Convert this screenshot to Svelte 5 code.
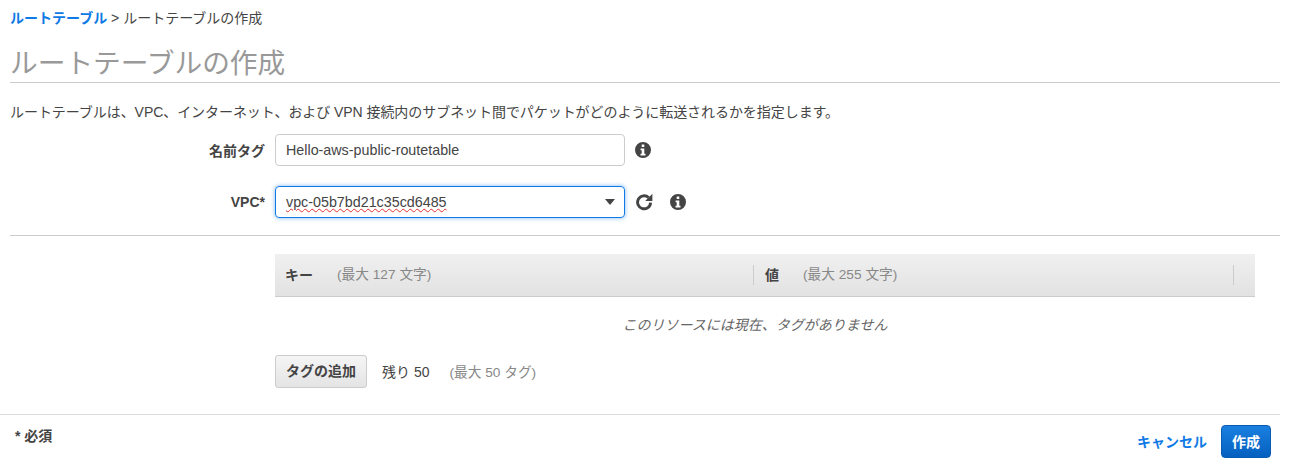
<script>
  const fontNote = 'Layout follows the AWS route table creation form';
</script>

<div class="page" data-note={fontNote}>
  <nav class="crumbs"><a href="#top">ルートテーブル</a> &gt; ルートテーブルの作成</nav>
  <h1>ルートテーブルの作成</h1>
  <p class="desc">ルートテーブルは、VPC、インターネット、および VPN 接続内のサブネット間でパケットがどのように転送されるかを指定します。</p>

  <div class="form">
    <div class="row first">
      <span class="label">名前タグ</span>
      <div class="input">Hello-aws-public-routetable</div>
      <svg class="info" viewBox="0 0 16 16"><use href="#i"></use></svg>
      <svg width="0" height="0" class="defs"><symbol id="i" viewBox="0 0 16 16"><path fill-rule="evenodd" d="M8 0a8 8 0 1 0 0 16A8 8 0 0 0 8 0ZM6.7 2.6h2.6v2.5H6.7ZM5.6 6.5h3.7v5.2h1.2v1.8H5.5v-1.8h1.2V8.3H5.6Z"/></symbol></svg>
    </div>
    <div class="row second">
      <span class="label">VPC*</span>
      <div class="input select"><span class="squiggle">vpc-05b7bd21c35cd6485</span><i class="caret"></i></div>
      <svg class="refresh" viewBox="0 0 18 18"><path d="M15.6 9.6A6.5 6.5 0 1 1 13.6 4.6" fill="none" stroke="#444" stroke-width="2.9"/><path d="M17.4 .8v7.2h-7.2Z" fill="#444"/></svg>
      <svg class="info gap" viewBox="0 0 16 16"><use href="#i"></use></svg>
    </div>
  </div>

  <hr class="rule" />

  <div class="tags">
    <div class="thead">
      <div class="th key"><b>キー</b><span>(最大 127 文字)</span></div>
      <div class="th val"><b>値</b><span>(最大 255 文字)</span></div>
    </div>
    <div class="empty">このリソースには現在、タグがありません</div>
    <div class="actions">
      <button class="add">タグの追加</button>
      <span class="left">残り 50</span>
      <span class="max">(最大 50 タグ)</span>
    </div>
  </div>

  <footer>
    <span class="req">* 必須</span>
    <div class="btns">
      <a href="#top" class="cancel">キャンセル</a>
      <button class="primary">作成</button>
    </div>
  </footer>
</div>

<style>
  :global(body) { margin: 0; background: #fff; }
  .page {
    width: 1294px; height: 468px; overflow: hidden; box-sizing: border-box;
    padding: 9px 14px 0 10px;
    font-family: "Liberation Sans", "Noto Sans CJK JP", sans-serif;
    font-size: 14px; color: #444;
  }
  .crumbs { height: 19px; line-height: 18px; }
  .crumbs a { color: #0f7ae5; font-weight: 700; text-decoration: none; }
  h1 {
    margin: 18px 0 0; height: 37px; line-height: 36px; box-sizing: border-box;
    font-size: 27.7px; font-weight: 400; color: #999; border-bottom: 1px solid #ccc;
  }
  .desc { margin: 0; padding-top: 20px; line-height: 19px; height: 19px; white-space: nowrap; letter-spacing: -0.06px; }
  .form { padding-top: 12px; }
  .row { display: flex; align-items: center; height: 32px; }
  .second { margin-top: 20px; }
  .label { width: 265px; box-sizing: border-box; text-align: right; padding-right: 10px; font-weight: 700; color: #444; }
  .input {
    width: 350px; height: 32px; box-sizing: border-box; border: 1px solid #ccc; border-radius: 4px;
    padding: 0 10px; line-height: 30px; color: #444; font-size: 14.3px; position: relative;
  }
  .select { border-color: #0f7ae5; box-shadow: 0 0 4px rgba(15, 122, 229, .55); }
  .squiggle { text-decoration: underline wavy #e0312e 1px; text-underline-offset: 1px; }
  .caret {
    position: absolute; right: 9px; top: 12px; width: 0; height: 0;
    border-left: 5.5px solid transparent; border-right: 5.5px solid transparent; border-top: 6px solid #444;
  }
  .info { width: 16px; height: 16px; margin-left: 10px; fill: #444; flex: none; }
  .refresh { width: 18px; height: 18px; margin-left: 10px; flex: none; }
  .gap { margin-left: 17px; }
  .defs { position: absolute; }
  .rule { margin: 17px 0 0; border: 0; border-top: 1px solid #ccc; height: 0; }
  .tags { margin: 18px 25px 0 265px; }
  .thead {
    display: flex; height: 43px; box-sizing: border-box; border-bottom: 1px solid #ccc;
    background: linear-gradient(#f0f0f0, #e2e2e2); align-items: center; font-size: 14px;
  }
  .th { height: 20px; line-height: 20px; box-sizing: border-box; display: flex; }
  .th b { color: #444; }
  .th span { color: #888; font-size: 13.7px; }
  .key { width: 478px; padding-left: 10px; }
  .key span { margin-left: 24px; }
  .val { width: 481px; padding-left: 11px; border-left: 1px solid #ccc; border-right: 1px solid #ccc; }
  .val span { margin-left: 24px; }
  .empty { text-align: center; padding-right: 20px; font-style: italic; color: #666; font-size: 14px; height: 58px; line-height: 56px; }
  .actions { display: flex; align-items: center; height: 33px; }
  button { font-family: inherit; font-weight: 700; cursor: pointer; padding: 0; }
  .add {
    width: 92px; height: 33px; border: 1px solid #ccc; border-radius: 3px; color: #444; font-size: 14px; padding-bottom: 3px;
    background: linear-gradient(#f5f5f5, #e4e4e4);
  }
  .left { margin-left: 15px; padding-bottom: 2px; }
  .max { margin-left: 20px; color: #888; padding-bottom: 2px; font-size: 13.7px; }
  footer {
    margin: 26px 0 0 -10px; padding: 10px 9px 0 15px; border-top: 1px solid #ddd;
    display: flex; justify-content: space-between;
  }
  .req { font-weight: 700; font-size: 14px; line-height: 22px; }
  .btns { display: flex; align-items: center; gap: 14px; }
  .cancel { color: #0f7ae5; font-weight: 700; text-decoration: none; font-size: 14px; padding-bottom: 2px; }
  .primary {
    width: 50px; height: 33px; border: 1px solid #0a5cb0; border-radius: 4px; color: #fff; font-size: 14px; padding-bottom: 2px;
    background: linear-gradient(#1a80e0, #0560bf);
  }
</style>
